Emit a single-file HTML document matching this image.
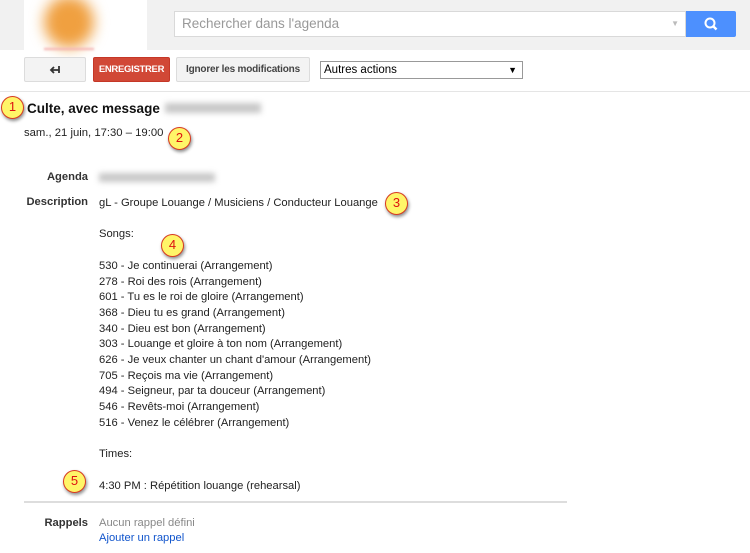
<!DOCTYPE html>
<html><head><meta charset="utf-8">
<style>
*{margin:0;padding:0;box-sizing:border-box}
body{width:750px;height:553px;position:relative;background:#fff;font-family:"Liberation Sans",Arial,sans-serif;font-size:11.2px;color:#222;overflow:hidden}
.a{position:absolute;white-space:nowrap}
.hdr{left:0;top:0;width:750px;height:50px;background:#f1f1f1}
.logo{left:24px;top:0;width:123px;height:50px;background:#fff}
.blob{left:44px;top:-4px;width:50px;height:52px;border-radius:50%;background:#f0a040;filter:blur(7px)}
.search{left:174px;top:11px;width:512px;height:26px;background:#fff;border:1px solid #d9d9d9;color:#999;font-size:13.5px;line-height:24px;padding-left:7px}
.sbtn{left:686px;top:11px;width:50px;height:26px;background:#4d90fe;border-radius:0 2px 2px 0}
.btn{top:57px;height:25px;border:1px solid #dcdcdc;background:#f3f3f3;border-radius:2px;font-size:10px;font-weight:bold;color:#444;line-height:23px;text-align:center;letter-spacing:-0.2px}
.red{background:#d14836;border-color:#c53727;color:#fff;font-size:9.5px;letter-spacing:-0.3px}
.sel{left:320px;top:61px;width:203px;height:18px;border:1px solid #999;background:#fff;font-size:11.5px;line-height:16px;padding-left:3px;color:#000}
.lbl{font-weight:bold;color:#333;text-align:right;width:64px;left:24px}
.c{width:23px;height:23px;border-radius:50%;background:#fff568;border:1.5px solid #d83a20;box-shadow:1px 2px 3px rgba(0,0,0,.45);color:#d11;font-size:13px;text-align:center;line-height:20px}
.blur{background:#c8c8c8;filter:blur(3px);height:9px}
</style></head><body>
<div class="a hdr"></div>
<div class="a logo"></div>
<div class="a blob"></div>
<div class="a" style="left:44px;top:48px;width:50px;height:2px;background:#f3b0b0;filter:blur(1px)"></div>
<div class="a search">Rechercher dans l'agenda<span style="position:absolute;right:6px;top:0;font-size:8px;color:#bbb">▼</span></div>
<div class="a sbtn"><svg width="50" height="26" viewBox="0 0 50 26"><circle cx="24" cy="12" r="4.5" fill="none" stroke="#fff" stroke-width="2"/><line x1="27" y1="15" x2="30.5" y2="18.5" stroke="#fff" stroke-width="2.5"/></svg></div>

<div class="a btn" style="left:24px;width:62px"><svg width="16" height="12" viewBox="0 0 16 12" style="margin-top:6px"><path d="M12 2v7M12 6H4M7 3L4 6l3 3" fill="none" stroke="#333" stroke-width="1.8"/></svg></div>
<div class="a btn red" style="left:93px;width:77px">ENREGISTRER</div>
<div class="a btn" style="left:176px;width:134px">Ignorer les modifications</div>
<div class="a sel">Autres actions<span style="position:absolute;right:5px;font-size:9px">▼</span></div>
<div class="a" style="left:0;top:91px;width:750px;height:1px;background:#e5e5e5"></div>

<div class="a" style="left:27px;top:101px;font-size:13.5px;font-weight:bold;color:#111">Culte, avec message</div>
<div class="a blur" style="left:165px;top:103px;width:96px;height:10px"></div>
<div class="a" style="left:24px;top:127px;font-size:11.3px;color:#222">sam., 21 juin, 17:30 – 19:00</div>

<div class="a lbl" style="top:171px">Agenda</div>
<div class="a blur" style="left:99px;top:173px;width:116px"></div>
<div class="a lbl" style="top:196px">Description</div>
<div class="a" style="left:99px;top:196px;line-height:15.7px;color:#222">
gL - Groupe Louange / Musiciens / Conducteur Louange<br><br>Songs:<br><br>
530 - Je continuerai (Arrangement)<br>
278 - Roi des rois (Arrangement)<br>
601 - Tu es le roi de gloire (Arrangement)<br>
368 - Dieu tu es grand (Arrangement)<br>
340 - Dieu est bon (Arrangement)<br>
303 - Louange et gloire à ton nom (Arrangement)<br>
626 - Je veux chanter un chant d'amour (Arrangement)<br>
705 - Reçois ma vie (Arrangement)<br>
494 - Seigneur, par ta douceur (Arrangement)<br>
546 - Revêts-moi (Arrangement)<br>
516 - Venez le célébrer (Arrangement)<br><br>
Times:<br><br>
4:30 PM : Répétition louange (rehearsal)</div>
<div class="a" style="left:24px;top:501px;width:543px;height:2px;background:#ddd"></div>
<div class="a lbl" style="top:517px">Rappels</div>
<div class="a" style="left:99px;top:517px;color:#888">Aucun rappel défini</div>
<div class="a" style="left:99px;top:532px;color:#1155cc">Ajouter un rappel</div>

<div class="a c" style="left:1px;top:96px">1</div>
<div class="a c" style="left:168px;top:127px">2</div>
<div class="a c" style="left:385px;top:192px">3</div>
<div class="a c" style="left:161px;top:234px">4</div>
<div class="a c" style="left:63px;top:470px">5</div>
</body></html>
